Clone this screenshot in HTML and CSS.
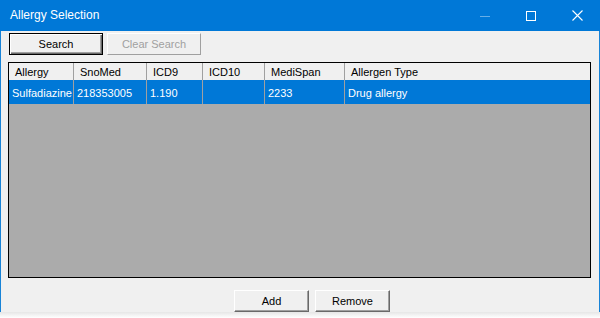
FILE: index.html
```html
<!DOCTYPE html>
<html>
<head>
<meta charset="utf-8">
<link rel="stylesheet" href="styles.css">
</head>
<body>
<div class="window">
  <div class="titlebar">
    <span class="title">Allergy Selection</span>
    <div class="caption">
      <span class="cbtn"><svg width="10" height="10" viewBox="0 0 10 10"><line x1="0" y1="5.5" x2="10" y2="5.5" stroke="#66aee8" stroke-width="1"/></svg></span>
      <span class="cbtn"><svg width="10" height="10" viewBox="0 0 10 10"><rect x="0.5" y="0.5" width="9" height="9" fill="none" stroke="#fff" stroke-width="1"/></svg></span>
      <span class="cbtn"><svg width="11" height="11" viewBox="0 0 11 11"><path d="M0.5 0.5 L10.5 10.5 M10.5 0.5 L0.5 10.5" stroke="#fff" stroke-width="1.1"/></svg></span>
    </div>
  </div>
  <div class="content">
    <div class="toolbar">
      <button class="btn default">Search</button>
      <button class="btn disabled">Clear Search</button>
    </div>
    <div class="grid">
      <div class="row head">
        <div class="cell">Allergy</div>
        <div class="cell">SnoMed</div>
        <div class="cell">ICD9</div>
        <div class="cell">ICD10</div>
        <div class="cell">MediSpan</div>
        <div class="cell last">Allergen Type</div>
      </div>
      <div class="row sel">
        <div class="cell">Sulfadiazine</div>
        <div class="cell">218353005</div>
        <div class="cell">1.190</div>
        <div class="cell"></div>
        <div class="cell">2233</div>
        <div class="cell last">Drug allergy</div>
      </div>
    </div>
    <div class="footer">
      <button class="btn">Add</button>
      <button class="btn">Remove</button>
    </div>
  </div>
</div>
<div class="shadow"></div>
</body>
</html>
```

FILE: styles.css
```css
html, body {
  margin: 0;
  padding: 0;
  background: #ffffff;
}
body {
  width: 600px;
  height: 318px;
  overflow: hidden;
  font-family: "Liberation Sans", Arial, sans-serif;
}
.window {
  width: 600px;
  height: 312px;
  box-sizing: border-box;
  border-left: 1px solid #1883d7;
  border-right: 1px solid #1883d7;
  background: #f0f0f0;
  display: flex;
  flex-direction: column;
}
.titlebar {
  height: 31px;
  background: #0078d7;
  display: flex;
  align-items: center;
  justify-content: space-between;
  margin: 0 -1px;
}
.title {
  color: #fff;
  font-family: "Liberation Sans", Arial, sans-serif;
  font-size: 12px;
  padding-left: 10px;
  padding-bottom: 1px;
}
.caption {
  display: flex;
  height: 31px;
}
.cbtn {
  width: 46px;
  height: 31px;
  display: flex;
  align-items: center;
  justify-content: center;
}
.content {
  flex: 1;
  display: flex;
  flex-direction: column;
}
.toolbar {
  display: flex;
  gap: 4px;
  padding: 2px 0 0 8px;
}
.btn {
  font-family: "Liberation Sans", Arial, sans-serif;
  font-size: 11px;
  color: #000;
  background: #f0f0f0;
  box-sizing: border-box;
  height: 22px;
  padding: 0;
  margin: 0;
  border-style: solid;
  border-width: 1px;
  border-color: #ffffff #696969 #696969 #ffffff;
  box-shadow: inset -1px -1px 0 #a0a0a0;
}
.toolbar .btn {
  width: 94px;
  height: 22px;
}
.btn.default {
  border: 1px solid #000;
  box-shadow: inset 1px 1px 0 #ffffff, inset -1px -1px 0 #696969, inset -2px -2px 0 #a0a0a0;
}
.btn.disabled {
  color: #a0a0a0;
  border-color: #ffffff #a0a0a0 #a0a0a0 #ffffff;
  box-shadow: none;
}
.grid {
  margin: 7px 8px 0 7px;
  height: 216px;
  box-sizing: border-box;
  border: 1px solid #000;
  background: #ababab;
  font-size: 11px;
}
.row {
  display: grid;
  grid-template-columns: 65px 73px 56px 62px 80px 1fr;
}
.row.head {
  height: 17px;
  background: #f0f0f0;
}
.row.head .cell {
  padding-left: 6px;
  line-height: 19px;
  color: #000;
}
.row.sel {
  height: 24px;
  background: #0078d7;
  color: #fff;
}
.row.sel .cell {
  padding-left: 3px;
  line-height: 27px;
}
.cell {
  border-right: 1px solid #a0a0a0;
  white-space: nowrap;
  overflow: hidden;
}
.cell.last {
  border-right: none;
}
.footer {
  display: flex;
  gap: 6px;
  padding: 12px 0 0 233px;
}
.footer .btn {
  width: 75px;
  height: 22px;
}
.shadow {
  height: 6px;
  background: linear-gradient(#e6e6e6, #ffffff);
}
```
